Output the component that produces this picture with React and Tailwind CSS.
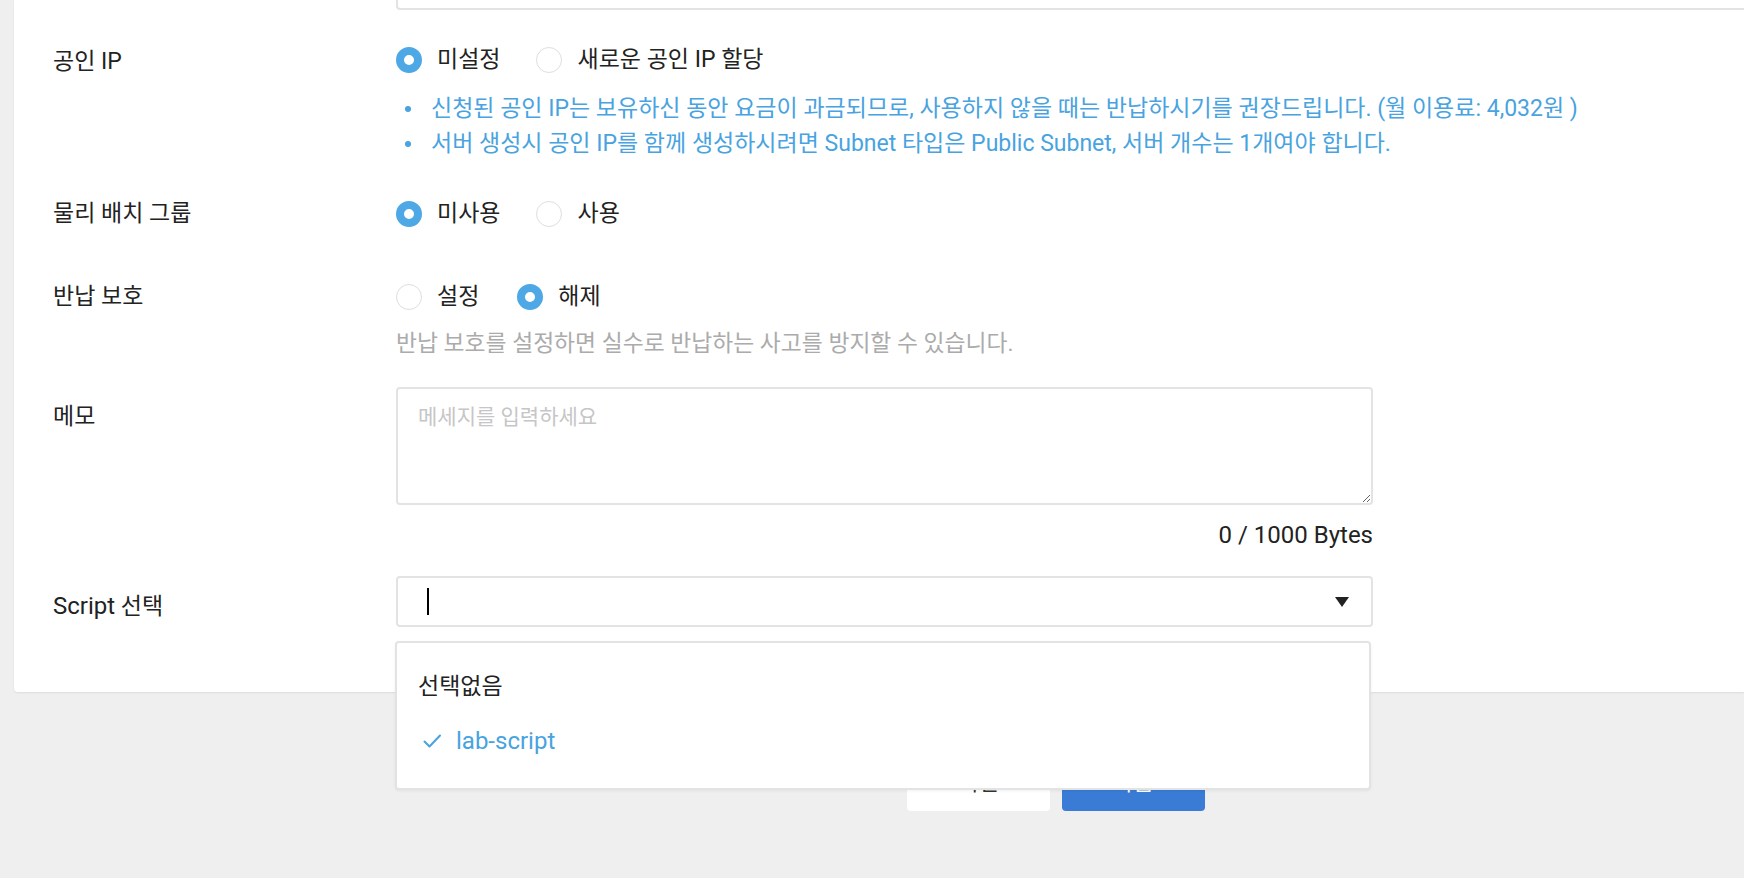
import React from "react";

function Radio({ checked, label }) {
  return (
    <div className="flex items-center">
      {checked ? (
        <span className="w-[26px] h-[26px] rounded-full border-[8px] border-[#4ea8e5] bg-white shrink-0" />
      ) : (
        <span className="w-[26px] h-[26px] rounded-full border-[1.5px] border-[#dedede] bg-white shrink-0" />
      )}
      <span className="ml-[15px] text-[23px] leading-[26px] text-[#222]">{label}</span>
    </div>
  );
}

function Row({ label, labelClass = "", children, className = "" }) {
  return (
    <div className={"flex " + className}>
      <div className={"w-[343px] shrink-0 text-[23px] leading-[26px] text-[#222] " + labelClass}>{label}</div>
      <div className="flex flex-col">{children}</div>
    </div>
  );
}

export default function App() {
  return (
    <div className="w-[1744px] h-[878px] bg-[#efefef] overflow-hidden [font-family:Roboto,'Noto_Sans_CJK_KR',sans-serif]">
      <div className="ml-[14px] bg-white rounded-bl-[4px] shadow-[0_1px_2px_rgba(0,0,0,0.08)] pl-[39px] pb-[65px] relative">
        {/* top input remnant */}
        <div className="ml-[343px] w-[1400px] h-[10px] border-2 border-t-0 border-[#e3e3e3] rounded-b-[4px]" />

        <Row label="공인 IP" labelClass="mt-[2px]" className="mt-[37px]">
          <div className="flex items-center">
            <Radio checked label="미설정" />
            <div className="ml-[36px]">
              <Radio label="새로운 공인 IP 할당" />
            </div>
          </div>
          <ul className="mt-[18px] text-[23px] leading-[35px] text-[#48a3e0] whitespace-nowrap">
            <li className="flex items-center">
              <span className="w-[6px] h-[6px] rounded-full bg-[#48a3e0] ml-[9px] mr-[20px] shrink-0" />
              신청된 공인 IP는 보유하신 동안 요금이 과금되므로, 사용하지 않을 때는 반납하시기를 권장드립니다. (월 이용료: 4,032원 )
            </li>
            <li className="flex items-center">
              <span className="w-[6px] h-[6px] rounded-full bg-[#48a3e0] ml-[9px] mr-[20px] shrink-0" />
              서버 생성시 공인 IP를 함께 생성하시려면 Subnet 타입은 Public Subnet, 서버 개수는 1개여야 합니다.
            </li>
          </ul>
        </Row>

        <Row label="물리 배치 그룹" className="mt-[40px]">
          <div className="flex items-center">
            <Radio checked label="미사용" />
            <div className="ml-[36px]">
              <Radio label="사용" />
            </div>
          </div>
        </Row>

        <Row label="반납 보호" className="mt-[57px]">
          <div className="flex items-center">
            <Radio label="설정" />
            <div className="ml-[38px]">
              <Radio checked label="해제" />
            </div>
          </div>
          <div className="mt-[21px] text-[22.8px] leading-[26px] text-[#ababab] whitespace-nowrap">
            반납 보호를 설정하면 실수로 반납하는 사고를 방지할 수 있습니다.
          </div>
        </Row>

        <Row label="메모" labelClass="mt-[17px]" className="mt-[30px]">
          <textarea
            className="w-[977px] h-[118px] border-2 border-[#e3e3e3] rounded-[4px] px-[20px] pt-[15px] text-[21px] leading-[26px] text-[#222] placeholder:text-[#c6c6c6] outline-none"
            placeholder="메세지를 입력하세요"
          />
          <div className="w-[977px] mt-[17px] text-right text-[24px] leading-[26px] text-[#222]">0 / 1000 Bytes</div>
        </Row>

        <Row
          label={
            <>
              <span className="text-[24px]">Script</span> 선택
            </>
          }
          labelClass="mt-[17px]"
          className="mt-[28px]"
        >
          <div className="relative">
            <div className="w-[977px] h-[51px] border-2 border-[#e3e3e3] rounded-[4px] flex items-center">
              <span className="ml-[29px] w-[2px] h-[27px] bg-black" />
              <svg className="ml-auto mr-[22px]" width="14" height="10" viewBox="0 0 14 10">
                <path d="M0 0 L14 0 L7 10 Z" fill="#222" />
              </svg>
            </div>
            <div className="absolute left-[-1px] top-[65px] w-[976px] h-[149px] z-10 bg-white border-2 border-[#e3e3e3] rounded-[4px] shadow-[0_1px_3px_rgba(0,0,0,0.06)] pt-[17px] pl-[21px]">
              <div className="h-[54px] flex items-center text-[23px] text-[#222]">선택없음</div>
              <div className="h-[54px] flex items-center text-[24px] text-[#48a3e0]">
                <svg width="20" height="16" viewBox="0 0 20 16" className="ml-[4px] mr-[14px]">
                  <path d="M2.5 8.5 L7.5 13.5 L18 2.5" fill="none" stroke="#48a3e0" strokeWidth="2" strokeLinecap="round" strokeLinejoin="round" />
                </svg>
                lab-script
              </div>
            </div>
          </div>
        </Row>
      </div>

      <div className="mt-[75px] ml-[907px] flex gap-[12px]">
        <button className="w-[143px] h-[44px] bg-white rounded-[4px] flex justify-center items-start pt-[4px] text-[22px] leading-[24px] text-[#333]">이전</button>
        <button className="w-[143px] h-[44px] bg-[#3a7bd5] rounded-[4px] flex justify-center items-start pt-[4px] text-[22px] leading-[24px] text-white">다음</button>
      </div>
    </div>
  );
}
